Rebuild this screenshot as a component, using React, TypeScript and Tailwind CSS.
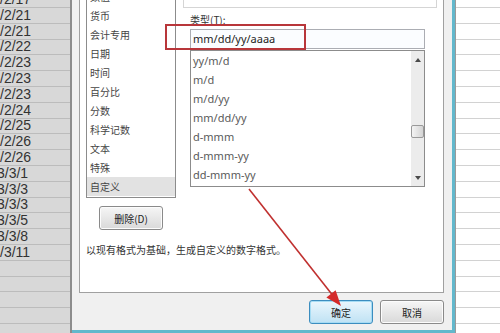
import React from 'react';

const DATES = [
  '/2/17', '/2/21', '/2/21', '/2/22', '/2/23', '/2/23', '/2/23', '/2/24', '/2/25',
  '/2/26', '/2/26', '3/3/1', '3/3/3', '3/3/3', '3/3/5', '3/3/8', '/3/11', '', '', '', '', '',
];

const CATEGORIES = ['数值', '货币', '会计专用', '日期', '时间', '百分比', '分数', '科学记数', '文本', '特殊', '自定义'];

const FORMATS = ['yy/m/d', 'm/d', 'm/d/yy', 'mm/dd/yy', 'd-mmm', 'd-mmm-yy', 'dd-mmm-yy'];

const cjk = "font-['Noto_Sans_CJK_SC',sans-serif]";

const Sheet = ({ left }: { left?: boolean }) => (
  <div
    className={
      left
        ? 'mt-[-7.8px] w-[72px] shrink-0 border-r-2 border-[#8c8c8c] bg-[#d8d8d8]'
        : 'mt-[-7.8px] flex-1 border-l border-[#9a9a9a] bg-white'
    }
  >
    {DATES.map((d, i) => (
      <div
        key={i}
        className={
          left
            ? "flex h-[15.8px] items-end overflow-hidden border-b border-[#bcbcbc] font-['Liberation_Sans',sans-serif] text-[14px] leading-[15px] text-[#333]"
            : 'h-[15.8px] border-b border-[#d2d2d2]'
        }
      >
        {left && <span className={d.startsWith('3') ? '-ml-[3px]' : ''}>{d}</span>}
      </div>
    ))}
  </div>
);

const Arrow = ({ up }: { up?: boolean }) => (
  <svg width="6" height="4" viewBox="0 0 6 4">
    <polygon points={up ? '0,4 3,0 6,4' : '0,0 6,0 3,4'} fill="#4a4a4a" />
  </svg>
);

const Button = ({ children, primary, className = '' }: { children: React.ReactNode; primary?: boolean; className?: string }) => (
  <div
    className={`flex h-[24px] w-[64px] items-center justify-center rounded-[3px] border text-[10px] text-[#222] ${cjk} ${
      primary
        ? 'border-[#3c8dbf] bg-gradient-to-b from-[#eaf6fd] to-[#bfe2f4] shadow-[inset_0_0_0_1px_#a6dcf4]'
        : 'border-[#8a8a8a] bg-gradient-to-b from-[#f6f6f6] to-[#d9d9d9] shadow-[inset_0_0_0_1px_#fcfcfc]'
    } ${className}`}
  >
    {children}
  </div>
);

const Dialog = () => (
  <div className="flex h-[333px] w-[383px] shrink-0 flex-col border-r-[3px] border-b-[3px] border-[#63b8cc] bg-[#f0f0f0] pl-[7px] pr-[8px]">
    <div className="-mt-[30px] flex h-[323px] flex-col border border-[#a0a0a0] bg-white px-[6px] pt-[15px]">
      <div className="flex">
        <div className="flex w-[90px] flex-col">
          <div className={`h-[212px] overflow-hidden border border-[#8c8c8c] bg-white text-[10px] text-[#444] ${cjk}`}>
            {CATEGORIES.map((c, i) => (
              <div
                key={c}
                className={`flex h-[19px] items-center pl-[3px] ${i === CATEGORIES.length - 1 ? 'bg-[#e2e2e2]' : ''}`}
              >
                {c}
              </div>
            ))}
          </div>
          <Button className="mx-auto mt-[8px] w-[63px]">删除(D)</Button>
        </div>

        <div className="ml-[7px] flex w-[254px] flex-col">
          <div className="h-[22px] border border-[#d5d5d5] bg-white" />
          <div className={`ml-[7px] mt-[5px] text-[10px] leading-[14px] text-[#333] ${cjk}`}>类型(T):</div>
          <div className="ml-[7px] mt-[2px] flex h-[20px] w-[235px] items-center border border-[#abadb3] bg-[#fbfdff] pl-[2px] font-['Noto_Sans',sans-serif] text-[11px] text-[#1e1e1e]">
            mm/dd/yy/aaaa
          </div>
          <div className="ml-[7px] mt-[1px] flex h-[137px] w-[235px] border border-[#8c8c8c] bg-white">
            <div className="flex-1 pl-[2px] pt-[1px] font-['Noto_Sans',sans-serif] text-[11px] text-[#5a5a5a]">
              {FORMATS.map((f) => (
                <div key={f} className="flex h-[19px] items-center">
                  {f}
                </div>
              ))}
            </div>
            <div className="flex w-[13px] flex-col bg-[#ececec]">
              <div className="flex h-[17px] items-center justify-center">
                <Arrow up />
              </div>
              <div className="mt-[57px] h-[13px] rounded-[2px] border border-[#9a9a9a] bg-gradient-to-r from-[#f4f4f4] to-[#d4d4d4]" />
              <div className="flex-1" />
              <div className="flex h-[17px] items-center justify-center">
                <Arrow />
              </div>
            </div>
          </div>
        </div>
      </div>
      <div className={`mt-[13px] text-[10px] leading-[14px] text-[#333] ${cjk}`}>
        以现有格式为基础，生成自定义的数字格式。
      </div>
    </div>

    <div className="mt-[7px] flex justify-end gap-[7px]">
      <Button primary>确定</Button>
      <Button>取消</Button>
    </div>
  </div>
);

export default function App() {
  return (
    <div className="relative flex h-[333px] w-[500px] overflow-hidden bg-white">
      <Sheet left />
      <Dialog />
      <Sheet />

      <div className="pointer-events-none absolute left-[165px] top-[24px] h-[26px] w-[141px] border-2 border-[#b8363a]" />
      <svg className="pointer-events-none absolute left-0 top-0" width="500" height="333">
        <line x1="249" y1="189" x2="334" y2="297" stroke="#c0302f" strokeWidth="1.6" />
        <polygon points="341,306 326.4,297.4 335.6,290.2" fill="#d42a2a" />
      </svg>
    </div>
  );
}
